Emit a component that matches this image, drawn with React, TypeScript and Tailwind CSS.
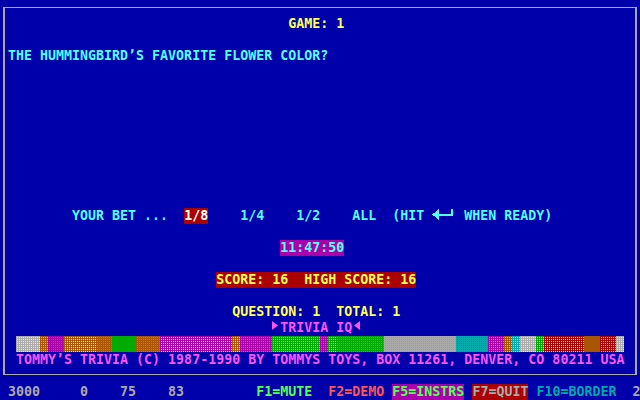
import type { ReactNode } from 'react';

// colour bar cells: [first cell, cell count, base colour, dot colour]
const BAR: [number, number, string, string][] = [
  [0, 3, '#AAAAAA', '#FFFF55'],
  [3, 1, '#AA5500', '#55FF55'],
  [4, 2, '#AA00AA', '#5555FF'],
  [6, 4, '#AA5500', '#FFFF55'],
  [10, 2, '#AA5500', '#FF5555'],
  [12, 3, '#00AA00', '#AA5500'],
  [15, 3, '#AA5500', '#FF5555'],
  [18, 9, '#AA00AA', '#FFFF55'],
  [27, 1, '#AA5500', '#FFFF55'],
  [28, 4, '#AA00AA', '#FF5555'],
  [32, 6, '#00AA00', '#55FF55'],
  [38, 1, '#AA00AA', '#FF5555'],
  [39, 1, '#00AA00', '#55FFFF'],
  [40, 6, '#00AA00', '#FF5555'],
  [46, 9, '#AAAAAA', '#FF55FF'],
  [55, 4, '#00AAAA', '#5555FF'],
  [59, 2, '#AA00AA', '#FF55FF'],
  [61, 1, '#AA5500', '#55FFFF'],
  [62, 1, '#00AAAA', '#55FFFF'],
  [63, 2, '#AAAAAA', '#FFFF55'],
  [65, 1, '#00AA00', '#FFFF55'],
  [66, 5, '#AA0000', '#FFFF55'],
  [71, 2, '#AA5500', '#AA5500'],
  [73, 2, '#AA0000', '#55FFFF'],
  [75, 1, '#AAAAAA', '#FFFF55'],
];

// one 1px dot every other pixel, both ways, on the odd pixels
function dots(x0: number, w: number) {
  let d = '';
  for (let y = 1; y < 16; y += 2) {
    for (let x = x0 + 1; x < x0 + w; x += 2) d += `M${x} ${y}h1v1h-1z`;
  }
  return d;
}

function Row({ children }: { children?: ReactNode }) {
  return <div className="h-4 leading-4 whitespace-pre">{children}</div>;
}

function Seg({ className, children }: { className: string; children: ReactNode }) {
  return <span className={`inline-block h-4 align-top ${className}`}>{children}</span>;
}

function ColorBar() {
  return (
    <svg width="608" height="16" className="inline-block align-top" shapeRendering="crispEdges">
      {BAR.map(([start, n, base, dot], i) => (
        <g key={i}>
          <rect x={start * 8} y="0" width={n * 8} height="16" fill={base} />
          <path d={dots(start * 8, n * 8)} fill={dot} />
        </g>
      ))}
    </svg>
  );
}

function EnterArrow() {
  return (
    <svg width="24" height="16" className="inline-block align-top" shapeRendering="crispEdges">
      <polygon points="0,6.5 7,1 7,12" fill="#55FFFF" />
      <rect x="7" y="6" width="14" height="2" fill="#55FFFF" />
      <rect x="19" y="1" width="2" height="7" fill="#55FFFF" />
    </svg>
  );
}

export default function App() {
  return (
    <div className="w-[640px] h-[400px] overflow-hidden bg-[#0000AA] font-['DejaVu_Sans_Mono',monospace] text-[13.3px] font-bold flex flex-col">
      <div className="mt-[7px] ml-[3px] w-[634px] h-[368px] shrink-0 border-y border-x-2 border-[#AAAAAA]">
        <div className="-ml-[5px] mt-2">
          <Row>
            <Seg className="text-[#FFFF55]">{'                                    GAME: 1'}</Seg>
          </Row>
          <Row />
          <Row>
            <Seg className="text-[#55FFFF]">{' THE HUMMINGBIRD\u2019S FAVORITE FLOWER COLOR?'}</Seg>
          </Row>
          <Row />
          <Row />
          <Row />
          <Row />
          <Row />
          <Row />
          <Row />
          <Row />
          <Row />
          <Row>
            <Seg className="text-[#55FFFF]">{'         YOUR BET ...  '}</Seg>
            <Seg className="text-white bg-[#AA0000]">1/8</Seg>
            <Seg className="text-[#55FFFF]">{'    1/4    1/2    ALL  (HIT '}</Seg>
            <EnterArrow />
            <Seg className="text-[#55FFFF]">{' WHEN READY)'}</Seg>
          </Row>
          <Row />
          <Row>
            <Seg className="text-[#55FFFF]">{'                                   '}</Seg>
            <Seg className="text-[#55FFFF] bg-[#AA00AA]">11:47:50</Seg>
          </Row>
          <Row />
          <Row>
            <Seg className="text-[#FFFF55]">{'                           '}</Seg>
            <Seg className="text-[#FFFF55] bg-[#AA0000]">{'SCORE: 16  HIGH SCORE: 16'}</Seg>
          </Row>
          <Row />
          <Row>
            <Seg className="text-[#FFFF55]">{'                             QUESTION: 1  TOTAL: 1'}</Seg>
          </Row>
          <Row>
            <Seg className="text-[#FF55FF]">{'                                  '}</Seg>
            <svg width="8" height="16" className="inline-block align-top">
              <polygon points="0,1 6,5.5 0,10" fill="#FF55FF" />
            </svg>
            <Seg className="text-[#FF55FF]">TRIVIA IQ</Seg>
            <svg width="8" height="16" className="inline-block align-top">
              <polygon points="8,1 2,5.5 8,10" fill="#FF55FF" />
            </svg>
          </Row>
          <Row>
            <Seg className="text-[#FF55FF]">{'  '}</Seg>
            <ColorBar />
          </Row>
          <Row>
            <Seg className="text-[#FF55FF]">
              {'  TOMMY\u2019S TRIVIA (C) 1987-1990 BY TOMMYS TOYS, BOX 11261, DENVER, CO 80211 USA'}
            </Seg>
          </Row>
        </div>
      </div>

      <div className="mt-[9px]">
        <Row>
          <Seg className="text-[#AAAAAA]">{' 3000     0    75    83         '}</Seg>
          <Seg className="text-[#55FF55]">F1=MUTE</Seg>
          <Seg className="text-[#FF5555]">{'  F2=DEMO '}</Seg>
          <Seg className="text-[#55FF55] bg-[#AA00AA]">F5=INSTRS</Seg>
          <Seg className="text-[#AAAAAA]"> </Seg>
          <Seg className="text-[#AAAAAA] bg-[#AA0000]">F7=QUIT</Seg>
          <Seg className="text-[#00AAAA]">{' F10=BORDER  '}</Seg>
          <Seg className="text-[#AAAAAA]">2</Seg>
        </Row>
      </div>
    </div>
  );
}
